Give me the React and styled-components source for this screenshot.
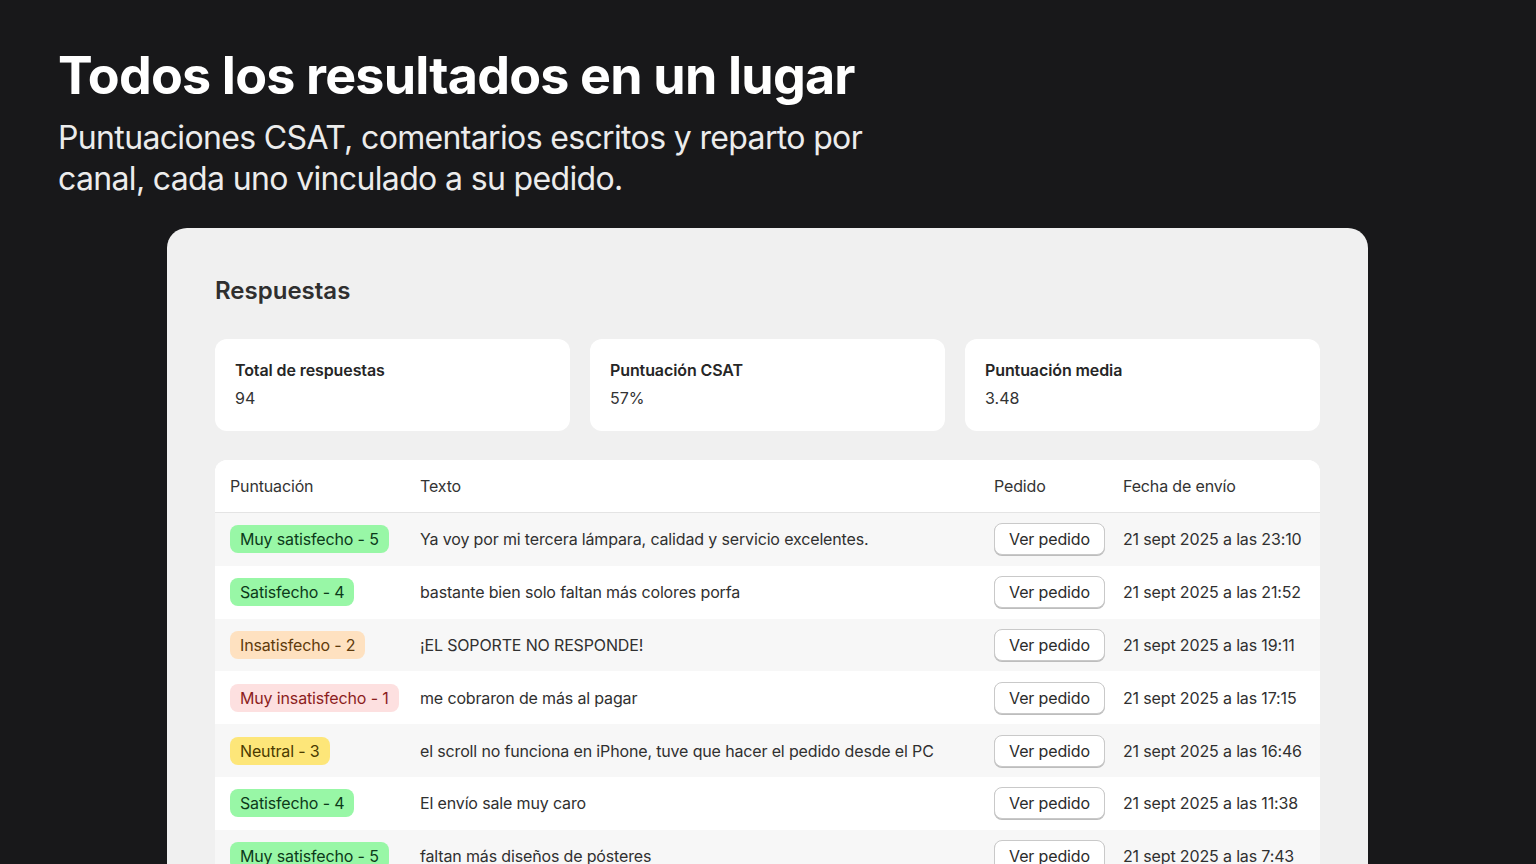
import React from "react";
import styled, { createGlobalStyle } from "styled-components";

const GlobalStyle = createGlobalStyle`
  html, body {
    margin: 0;
    padding: 0;
    background: #18181a;
    height: 864px;
    overflow: hidden;
  }
  * { box-sizing: border-box; }
  body {
    font-family: Inter, "Noto Sans", sans-serif;
    -webkit-font-smoothing: antialiased;
  }
`;

const Page = styled.div`
  padding: 44px 0 0 58px;
  color: #fff;
`;

const Heading = styled.h1`
  margin: 0;
  font-size: 52px;
  line-height: 64px;
  font-weight: 700;
  letter-spacing: -0.8px;
  color: #fff;
`;

const Lead = styled.p`
  margin: 9px 0 0 0;
  width: 830px;
  font-size: 32px;
  line-height: 41px;
  font-weight: 400;
  letter-spacing: -0.65px;
  color: #ececec;
`;

const Panel = styled.section`
  margin: 29px 0 0 109px;
  width: 1201px;
  background: #f0f0f0;
  border-radius: 20px 20px 0 0;
  padding: 45px 48px 0 48px;
  min-height: 700px;
`;

const PanelTitle = styled.h2`
  margin: 0 0 30px 0;
  font-size: 24px;
  line-height: 36px;
  font-weight: 600;
  color: #2f2f2f;
`;

const Stats = styled.div`
  display: grid;
  grid-template-columns: repeat(3, 1fr);
  gap: 20px;
`;

const StatCard = styled.div`
  background: #fff;
  border-radius: 12px;
  height: 92px;
  padding: 21px 20px;
  display: flex;
  flex-direction: column;
  gap: 8px;
`;

const StatLabel = styled.div`
  font-size: 16px;
  line-height: 20px;
  font-weight: 600;
  letter-spacing: -0.1px;
  color: #262626;
`;

const StatValue = styled.div`
  font-size: 16px;
  line-height: 20px;
  color: #333;
`;

const Table = styled.div`
  margin-top: 29px;
  background: #fff;
  border-radius: 12px 12px 0 0;
  overflow: hidden;
`;

const Row = styled.div`
  display: grid;
  grid-template-columns: 190px 1fr 129px 212px;
  align-items: center;
  height: ${({ $head }) => ($head ? "53px" : "52.8px")};
  background: ${({ $shade }) => ($shade ? "#f7f7f7" : "#fff")};
  border-bottom: ${({ $head }) => ($head ? "1px solid #e4e4e4" : "none")};
`;

const Cell = styled.div`
  padding-left: 15px;
  font-size: 16px;
  line-height: 22px;
  letter-spacing: -0.15px;
  color: #303030;
  white-space: nowrap;
`;

const HeadCell = styled(Cell)`
  color: #333;
`;

const tones = {
  great: { bg: "#98f7a6", fg: "#0c3a1a" },
  good: { bg: "#98f7a6", fg: "#0c3a1a" },
  neutral: { bg: "#fde679", fg: "#4a3a00" },
  bad: { bg: "#fee1c0", fg: "#5e3b0c" },
  awful: { bg: "#fde0e0", fg: "#8c1d1d" },
};

const Badge = styled.span`
  display: inline-block;
  padding: 3px 10px;
  border-radius: 8px;
  font-size: 16px;
  line-height: 22px;
  background: ${({ $tone }) => tones[$tone].bg};
  color: ${({ $tone }) => tones[$tone].fg};
`;

const OrderButton = styled.button`
  font-family: inherit;
  font-size: 16px;
  line-height: 20px;
  letter-spacing: -0.15px;
  color: #2b2b2b;
  background: #fff;
  border: 1px solid #c9c9c9;
  border-radius: 8px;
  padding: 5px 14px;
  width: 111px;
  height: 32px;
  box-shadow: 0 1px 0 #bdbdbd;
  cursor: pointer;
`;

const responses = [
  { tone: "great", label: "Muy satisfecho - 5", text: "Ya voy por mi tercera lámpara, calidad y servicio excelentes.", date: "21 sept 2025 a las 23:10" },
  { tone: "good", label: "Satisfecho - 4", text: "bastante bien solo faltan más colores porfa", date: "21 sept 2025 a las 21:52" },
  { tone: "bad", label: "Insatisfecho - 2", text: "¡EL SOPORTE NO RESPONDE!", date: "21 sept 2025 a las 19:11" },
  { tone: "awful", label: "Muy insatisfecho - 1", text: "me cobraron de más al pagar", date: "21 sept 2025 a las 17:15" },
  { tone: "neutral", label: "Neutral - 3", text: "el scroll no funciona en iPhone, tuve que hacer el pedido desde el PC", date: "21 sept 2025 a las 16:46" },
  { tone: "good", label: "Satisfecho - 4", text: "El envío sale muy caro", date: "21 sept 2025 a las 11:38" },
  { tone: "great", label: "Muy satisfecho - 5", text: "faltan más diseños de pósteres", date: "21 sept 2025 a las 7:43" },
];

const stats = [
  { label: "Total de respuestas", value: "94" },
  { label: "Puntuación CSAT", value: "57%" },
  { label: "Puntuación media", value: "3.48" },
];

export default function App() {
  return (
    <>
      <GlobalStyle />
      <Page>
        <Heading>Todos los resultados en un lugar</Heading>
        <Lead>
          Puntuaciones CSAT, comentarios escritos y reparto por canal, cada uno
          vinculado a su pedido.
        </Lead>
        <Panel>
          <PanelTitle>Respuestas</PanelTitle>
          <Stats>
            {stats.map((s) => (
              <StatCard key={s.label}>
                <StatLabel>{s.label}</StatLabel>
                <StatValue>{s.value}</StatValue>
              </StatCard>
            ))}
          </Stats>
          <Table>
            <Row $head>
              <HeadCell>Puntuación</HeadCell>
              <HeadCell>Texto</HeadCell>
              <HeadCell>Pedido</HeadCell>
              <HeadCell>Fecha de envío</HeadCell>
            </Row>
            {responses.map((r, i) => (
              <Row key={i} $shade={i % 2 === 0}>
                <Cell>
                  <Badge $tone={r.tone}>{r.label}</Badge>
                </Cell>
                <Cell>{r.text}</Cell>
                <Cell>
                  <OrderButton>Ver pedido</OrderButton>
                </Cell>
                <Cell>{r.date}</Cell>
              </Row>
            ))}
          </Table>
        </Panel>
      </Page>
    </>
  );
}
